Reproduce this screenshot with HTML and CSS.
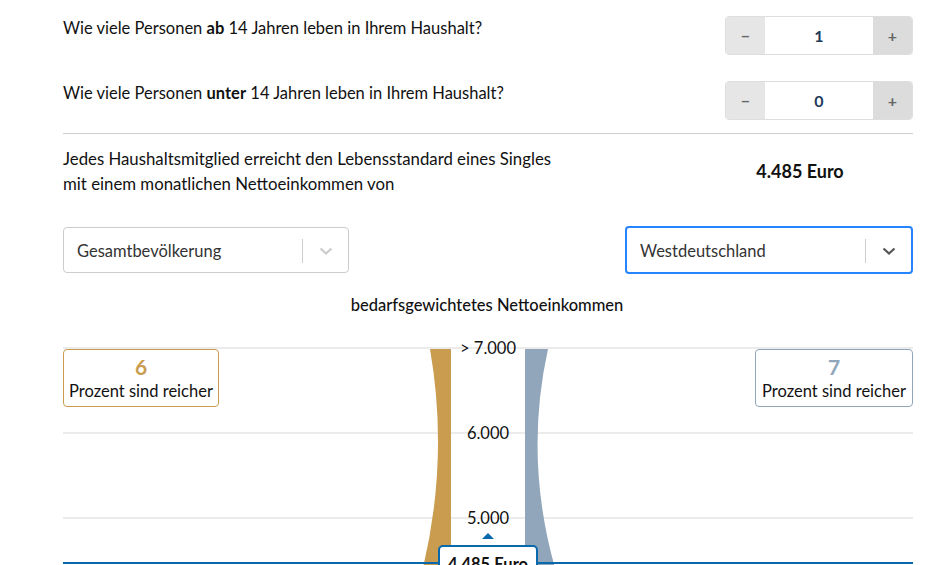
FILE: index.html
```html
<!DOCTYPE html>
<html lang="de">
<head>
    <meta charset="UTF-8">
    <title>Nettoeinkommen Rechner</title>
    <link rel="stylesheet" href="styles.css">
</head>
<body>
    <div class="container">
        <div class="question">
            <div class="question-text">Wie viele Personen <b>ab</b> 14 Jahren leben in Ihrem Haushalt?</div>
            <div class="stepper">
                <button class="step minus">&minus;</button>
                <div class="step-value">1</div>
                <button class="step plus">+</button>
            </div>
        </div>

        <div class="question">
            <div class="question-text">Wie viele Personen <b>unter</b> 14 Jahren leben in Ihrem Haushalt?</div>
            <div class="stepper">
                <button class="step minus">&minus;</button>
                <div class="step-value">0</div>
                <button class="step plus">+</button>
            </div>
        </div>

        <div class="result-row">
            <div class="result-text">
                Jedes Haushaltsmitglied erreicht den Lebensstandard eines Singles<br>
                mit einem monatlichen Nettoeinkommen von
            </div>
            <div class="result-value">4.485 Euro</div>
        </div>

        <div class="selects">
            <div class="select">
                <span class="select-label">Gesamtbevölkerung</span>
                <span class="select-sep"></span>
                <svg class="select-arrow" width="20" height="20" viewBox="0 0 20 20"><path d="M4.5 7.5 L10 12.5 L15.5 7.5" fill="none" stroke="currentColor" stroke-width="2.2"/></svg>
            </div>
            <div class="select focused">
                <span class="select-label">Westdeutschland</span>
                <span class="select-sep"></span>
                <svg class="select-arrow" width="20" height="20" viewBox="0 0 20 20"><path d="M4.5 7.5 L10 12.5 L15.5 7.5" fill="none" stroke="currentColor" stroke-width="2.2"/></svg>
            </div>
        </div>

        <h2 class="chart-title">bedarfsgewichtetes Nettoeinkommen</h2>

        <div class="chart">
            <svg class="chart-svg" width="850" height="230" viewBox="0 0 850 230">
                <line x1="0" y1="10" x2="850" y2="10" stroke="#ebebeb" stroke-width="2"/>
                <line x1="0" y1="95" x2="850" y2="95" stroke="#ebebeb" stroke-width="2"/>
                <line x1="0" y1="180" x2="850" y2="180" stroke="#ebebeb" stroke-width="2"/>
                <path d="M367 11 L388 11 L388 230 L360 230 Q386 120 367 11 Z" fill="#c99c4f"/>
                <path d="M462 11 L485 11 Q461 120 492 230 L462 230 Z" fill="#91a6ba"/>
                <line x1="0" y1="225" x2="850" y2="225" stroke="#0a68ad" stroke-width="2"/>
                <path d="M419 201 L431 201 L425 195 Z" fill="#0a68ad"/>
            </svg>

            <span class="axis-label" style="top: 0px;">&gt; 7.000</span>
            <span class="axis-label" style="top: 85px;">6.000</span>
            <span class="axis-label" style="top: 170px;">5.000</span>

            <div class="share-box left">
                <div class="share-num">6</div>
                <div class="share-text">Prozent sind reicher</div>
            </div>
            <div class="share-box right">
                <div class="share-num">7</div>
                <div class="share-text">Prozent sind reicher</div>
            </div>

            <div class="marker">4.485 Euro</div>
        </div>
    </div>
</body>
</html>
```

FILE: styles.css
```css
body {
    margin: 0;
    font-family: "Source Sans Pro", "Lato", sans-serif;
    font-size: 16.5px;
    color: #111;
    background: white;
    overflow: hidden;
}
.container {
    width: 850px;
    padding: 16px 0 0 63px;
}
.question {
    display: flex;
    justify-content: space-between;
    align-items: flex-start;
    margin-bottom: 26px;
}
.question-text {
    padding-top: 2px;
}
.question-text b {
    font-weight: bold;
}
.stepper {
    display: flex;
    width: 186px;
    height: 37px;
    border: 1px solid #dedede;
    border-radius: 4px;
    overflow: hidden;
}
.step {
    width: 39px;
    border: none;
    background: #e6e6e6;
    color: #666;
    font-size: 16px;
    font-weight: bold;
    font-family: inherit;
    padding: 0;
}
.step.plus {
    background: #dcdcdc;
}
.step-value {
    flex: 1;
    display: flex;
    align-items: center;
    justify-content: center;
    font-size: 16px;
    font-weight: bold;
    color: #1f3a5a;
}
.result-row {
    display: flex;
    justify-content: space-between;
    align-items: center;
    border-top: 1px solid #cfcfcf;
    margin-top: -13px;
    padding-top: 12px;
    line-height: 25px;
}
.result-text {
    font-size: 16.8px;
}
.result-value {
    width: 226px;
    text-align: center;
    font-size: 18px;
    font-weight: bold;
}
.selects {
    display: flex;
    justify-content: space-between;
    margin-top: 31px;
}
.select {
    display: flex;
    align-items: center;
    box-sizing: border-box;
    width: 286px;
    height: 46px;
    border: 1px solid #ccc;
    border-radius: 4px;
    padding: 2px 0 0 13px;
    color: #333;
}
.select.focused {
    width: 288px;
    height: 48px;
    border: 2px solid #2684ff;
    margin-top: -1px;
}
.select-label {
    flex: 1;
}
.select-sep {
    width: 1px;
    height: 24px;
    background: #ccc;
}
.select-arrow {
    margin: 0 12px 0 13px;
    color: #ccc;
}
.select.focused .select-arrow {
    color: #555;
}
.chart-title {
    margin: 21px 0 0;
    font-size: 16.5px;
    font-weight: 500;
    text-align: center;
    line-height: 20px;
    transform: translateX(-1px);
}
.chart {
    position: relative;
    height: 240px;
    margin-top: 23px;
}
.chart-svg {
    position: absolute;
    top: 0;
    left: 0;
}
.axis-label {
    position: absolute;
    left: 375px;
    width: 100px;
    text-align: center;
    line-height: 20px;
}
.share-box {
    position: absolute;
    top: 11px;
    height: 56px;
    border-radius: 4px;
    text-align: center;
    background: white;
}
.share-box.left {
    left: 0;
    width: 154px;
    border: 1px solid #c99c4f;
}
.share-box.right {
    right: 0;
    width: 156px;
    border: 1px solid #91a6ba;
}
.share-num {
    font-size: 21px;
    font-weight: bold;
    line-height: 26px;
    margin-top: 4px;
}
.left .share-num {
    color: #c99c4f;
}
.right .share-num {
    color: #91a6ba;
}
.share-text {
    line-height: 22px;
}
.marker {
    position: absolute;
    top: 207px;
    left: 375px;
    width: 96px;
    height: 30px;
    border: 2px solid #0a68ad;
    border-radius: 5px;
    background: white;
    text-align: center;
    font-weight: bold;
    line-height: 26px;
    padding-top: 4px;
    box-sizing: content-box;
}
```
